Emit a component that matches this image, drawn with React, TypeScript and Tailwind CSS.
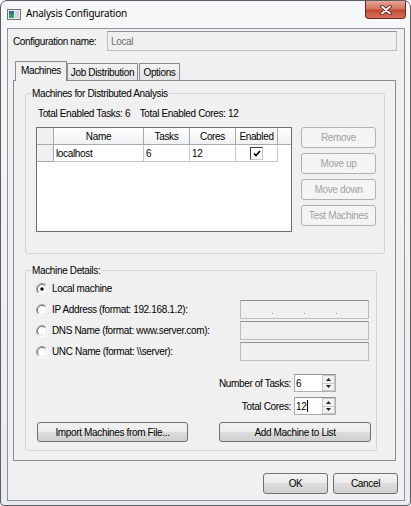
import React from "react";

const btn =
  "flex items-center justify-center whitespace-nowrap rounded-[3px] border border-[#707070] bg-[linear-gradient(#f2f2f2,#ebebeb_50%,#dddddd_50%,#cfcfcf)] text-black";
const btnOff =
  "flex items-center justify-center whitespace-nowrap rounded-[3px] border border-[#adb2b5] bg-[#f4f4f4] text-[#a3a3a3]";
const field = "border border-[#b9bcc1] border-t-[#8e9196] bg-[#f0f0f0]";

function TitleIcon() {
  return (
    <svg width="14" height="11" viewBox="0 0 14 11" className="ml-[6px] mt-[8px]">
      <rect x="0.5" y="0.5" width="13" height="10" fill="#e9ecef" stroke="#6f7478" />
      <rect x="2" y="2" width="5" height="7" fill="#2f6f8f" />
      <rect x="2" y="5" width="5" height="4" fill="#3f9a6a" />
      <rect x="8" y="2" width="4" height="7" fill="#cfd6dc" />
    </svg>
  );
}

function CloseButton() {
  return (
    <div className="ml-auto mr-[4px] flex h-[18px] w-[41px] items-center justify-center rounded-b-[4px] border border-t-0 border-[#6b2a20] bg-[linear-gradient(#e8a596,#d27563_45%,#c24a35_55%,#d1735a)]">
      <svg width="12" height="10" viewBox="0 0 12 10">
        <path d="M2 1.5 L10 8.5 M10 1.5 L2 8.5" stroke="#4a1a12" strokeWidth="3.4" strokeLinecap="round" />
        <path d="M2 1.5 L10 8.5 M10 1.5 L2 8.5" stroke="#ffffff" strokeWidth="1.8" strokeLinecap="round" />
      </svg>
    </div>
  );
}

function Radio({ checked }: { checked?: boolean }) {
  return (
    <svg width="12" height="12" viewBox="0 0 12 12" className="shrink-0">
      <circle cx="6" cy="6" r="5" fill="#ffffff" />
      <path d="M2.1 9.9 A5.5 5.5 0 0 1 9.9 2.1" fill="none" stroke="#a0a0a0" />
      <path d="M9.9 2.1 A5.5 5.5 0 0 1 2.1 9.9" fill="none" stroke="#ffffff" />
      <path d="M2.8 9.2 A4.5 4.5 0 0 1 9.2 2.8" fill="none" stroke="#707070" />
      <path d="M9.2 2.8 A4.5 4.5 0 0 1 2.8 9.2" fill="none" stroke="#e6e6e6" />
      {checked && <circle cx="6" cy="6" r="1.8" fill="#111111" />}
    </svg>
  );
}

function Spin({ value, caret }: { value: string; caret?: boolean }) {
  return (
    <div className="flex h-[18px] w-[42px] border border-[#abadb3] border-t-[#8e9196] bg-white">
      <div className="flex flex-1 items-center pl-[1px]">
        <span>{value}</span>
        {caret && <span className="ml-[1px] h-[12px] w-[1px] bg-black" />}
      </div>
      <div className="flex w-[13px] flex-col">
        <div className="flex flex-1 items-center justify-center border border-[#c9c9c9] bg-[#f1f1f1]">
          <svg width="5" height="3" viewBox="0 0 5 3">
            <path d="M0 3 L2.5 0 L5 3 Z" fill="#222" />
          </svg>
        </div>
        <div className="flex flex-1 items-center justify-center border border-t-0 border-[#c9c9c9] bg-[#f1f1f1]">
          <svg width="5" height="3" viewBox="0 0 5 3">
            <path d="M0 0 L5 0 L2.5 3 Z" fill="#222" />
          </svg>
        </div>
      </div>
    </div>
  );
}

function MachineGrid() {
  const head = "flex items-center justify-center border-r border-[#a9a9a9]";
  const cell = "flex items-center border-r border-[#c8c8c8] pl-[2px]";
  return (
    <div className="flex h-[105px] w-[256px] flex-col border border-[#6d6d6d] bg-white">
      <div className="flex h-[17px] border-b border-[#a9a9a9] bg-[linear-gradient(#ffffff,#f0f1f2)]">
        <div className="w-[17px] border-r border-[#a9a9a9] bg-[#f0f0f0]" />
        <div className={`${head} w-[90px]`}>Name</div>
        <div className={`${head} w-[46px]`}>Tasks</div>
        <div className={`${head} w-[46px]`}>Cores</div>
        <div className={`${head} w-[42px]`}>Enabled</div>
        <div className="flex-1" />
      </div>
      <div className="flex h-[17px]">
        <div className="w-[17px] border-r border-b border-[#a9a9a9] bg-[#f0f0f0]" />
        <div className={`${cell} w-[90px] border-b`}>localhost</div>
        <div className={`${cell} w-[46px] border-b`}>6</div>
        <div className={`${cell} w-[46px] border-b`}>12</div>
        <div className="flex w-[42px] items-center justify-center border-r border-b border-[#c8c8c8]">
          <div className="flex h-[13px] w-[13px] items-center justify-center border border-t-[#3c3c3c] border-l-[#3c3c3c] border-r-[#c9c9c9] border-b-[#c9c9c9] bg-white">
            <svg width="8" height="7" viewBox="0 0 8 7">
              <path d="M1 3.5 L3 5.5 L7 1" fill="none" stroke="#000" strokeWidth="1.7" />
            </svg>
          </div>
        </div>
      </div>
    </div>
  );
}

function IpField() {
  return (
    <div className={`${field} flex h-[19px] w-[129px] items-end justify-between px-[31px] pb-[4px]`}>
      <span className="h-[1px] w-[1px] bg-[#8a8a8a]" />
      <span className="h-[1px] w-[1px] bg-[#8a8a8a]" />
      <span className="h-[1px] w-[1px] bg-[#8a8a8a]" />
    </div>
  );
}

export default function App() {
  return (
    <div className="h-[506px] w-[411px] bg-white">
      <div className="flex h-[506px] w-[411px] flex-col whitespace-nowrap rounded-t-[7px] rounded-b-[4px] border border-[#5b5f63] bg-[linear-gradient(#f6f7f9,#e9ecef)] font-['Liberation_Sans',Arial,sans-serif] text-[10px] leading-[13px] tracking-[-0.35px] text-black">
        {/* Title bar */}
        <div className="flex h-[27px] shrink-0">
          <TitleIcon />
          <span className="ml-[5px] mt-[5px] font-['Noto_Sans',sans-serif] text-[10px] leading-[15px] tracking-[-0.2px] text-black">
            Analysis Configuration
          </span>
          <CloseButton />
        </div>

        {/* Client area */}
        <div className="ml-[6px] h-[473px] w-[398px] shrink-0 border border-[#8f9296] bg-[#f0f0f0]">
          <div className="mt-[2px] flex h-[20px] items-center">
            <span className="w-[99px] pl-[5px]">Configuration name:</span>
            <div className={`${field} flex h-[20px] w-[290px] items-center pl-[3px] text-[#6d6d6d]`}>Local</div>
          </div>

          {/* Tabs */}
          <div className="ml-[7px] mt-[10px] flex h-[19px] items-end">
            <div className="relative z-10 -mb-px flex h-[20px] w-[52px] items-center justify-center border border-b-0 border-[#898c95] bg-[#f0f0f0] pb-[2px]">
              Machines
            </div>
            <div className="flex h-[17px] w-[71px] items-center justify-center border border-b-0 border-[#898c95] bg-[linear-gradient(#f2f2f2,#e4e4e4)]">
              Job Distribution
            </div>
            <div className="ml-px flex h-[17px] w-[41px] items-center justify-center border border-b-0 border-[#898c95] bg-[linear-gradient(#f2f2f2,#e4e4e4)]">
              Options
            </div>
          </div>

          <div className="ml-[5px] h-[381px] w-[383px] border border-[#898c95] bg-[#f0f0f0]">
            {/* Machines group */}
            <fieldset className="ml-[11px] mt-[6px] h-[167px] w-[360px] rounded-[3px] border border-[#d0d4d8]">
              <legend className="ml-[5px] px-[1px] leading-[13px]">Machines for Distributed Analysis</legend>
              <div className="mt-[7px] pl-[12px]">Total Enabled Tasks: 6&nbsp;&nbsp;&nbsp; Total Enabled Cores: 12</div>
              <div className="mt-[7px] flex items-start gap-[9px] pl-[10px]">
                <MachineGrid />
                <div className="flex w-[75px] flex-col gap-[5px]">
                  <div className={`${btnOff} h-[21px]`}>Remove</div>
                  <div className={`${btnOff} h-[21px]`}>Move up</div>
                  <div className={`${btnOff} h-[21px]`}>Move down</div>
                  <div className={`${btnOff} h-[21px]`}>Test Machines</div>
                </div>
              </div>
            </fieldset>

            {/* Machine details group */}
            <fieldset className="ml-[11px] mt-[10px] h-[187px] w-[352px] rounded-[3px] border border-[#d0d4d8]">
              <legend className="ml-[5px] px-[1px] leading-[13px]">Machine Details:</legend>
              <div className="mt-[1px] flex flex-col pl-[10px]">
                <div className="flex h-[21px] items-center">
                  <div className="flex w-[204px] items-center gap-[4px]">
                    <Radio checked />
                    <span>Local machine</span>
                  </div>
                </div>
                <div className="flex h-[21px] items-center">
                  <div className="flex w-[204px] items-center gap-[4px]">
                    <Radio />
                    <span>IP Address (format: 192.168.1.2):</span>
                  </div>
                  <IpField />
                </div>
                <div className="flex h-[21px] items-center">
                  <div className="flex w-[204px] items-center gap-[4px]">
                    <Radio />
                    <span>DNS Name (format: www.server.com):</span>
                  </div>
                  <div className={`${field} h-[19px] w-[129px]`} />
                </div>
                <div className="flex h-[21px] items-center">
                  <div className="flex w-[204px] items-center gap-[4px]">
                    <Radio />
                    <span>UNC Name (format: \\server):</span>
                  </div>
                  <div className={`${field} h-[19px] w-[129px]`} />
                </div>
              </div>

              <div className="mt-[12px] flex flex-col gap-[5px] pr-[40px]">
                <div className="flex items-center justify-end gap-[3px]">
                  <span>Number of Tasks:</span>
                  <Spin value="6" />
                </div>
                <div className="flex items-center justify-end gap-[3px]">
                  <span>Total Cores:</span>
                  <Spin value="12" caret />
                </div>
              </div>

              <div className="mt-[7px] flex">
                <div className={`${btn} ml-[11px] h-[20px] w-[151px]`}>Import Machines from File...</div>
                <div className={`${btn} ml-[31px] h-[20px] w-[152px]`}>Add Machine to List</div>
              </div>
            </fieldset>
          </div>

          {/* Dialog buttons */}
          <div className="mt-[12px] flex justify-end gap-[5px] pr-[6px]">
            <div className={`${btn} h-[21px] w-[65px]`}>OK</div>
            <div className={`${btn} h-[21px] w-[65px]`}>Cancel</div>
          </div>
        </div>
      </div>
    </div>
  );
}
